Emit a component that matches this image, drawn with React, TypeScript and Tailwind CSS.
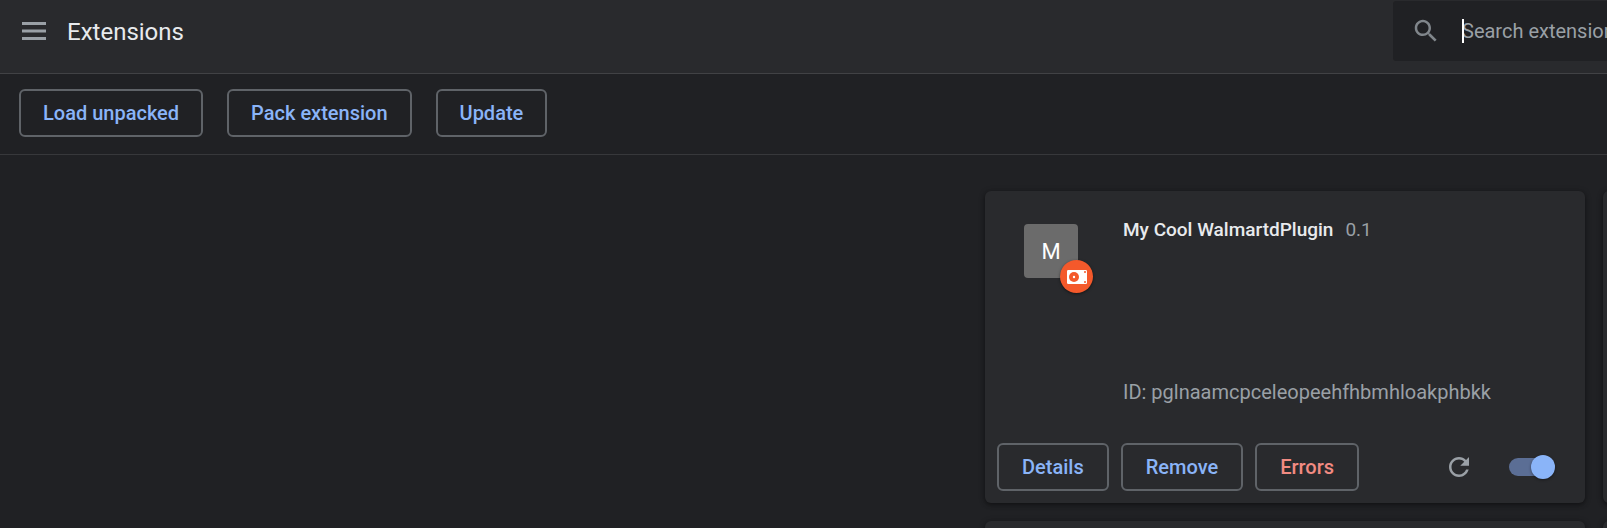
import { useState } from "react";
import type { ReactNode } from "react";

type ButtonProps = { children: ReactNode; tone?: "toolbar" | "card" | "danger" };

const toneClasses = {
  toolbar: "px-[22px] text-[#8ab4f8]",
  card: "px-[23px] text-[#8ab4f8]",
  danger: "px-[23px] text-[#f28b82]",
};

function ActionButton({ children, tone = "toolbar" }: ButtonProps) {
  return (
    <button
      type="button"
      className={`h-12 shrink-0 whitespace-nowrap rounded-md border-2 border-[#5f6368] text-[20px] font-medium ${toneClasses[tone]}`}
    >
      {children}
    </button>
  );
}

function Header() {
  return (
    <header className="flex items-start border-b border-[#414245] bg-[#292a2d] pb-[9px]">
      <div className="flex h-16 items-center gap-[21px] pl-[22px]">
        <button type="button" aria-label="Main menu" className="shrink-0 pb-0.5">
          <svg viewBox="0 0 24 18" className="block h-[18px] w-6" fill="#9aa0a6">
            <path d="M0 0h24v3H0zM0 7.5h24v3H0zM0 15h24v3H0z" />
          </svg>
        </button>
        <h1 className="text-[24px] leading-8 text-[#e8eaed]">Extensions</h1>
      </div>
      <label className="relative mt-px ml-auto flex h-[60px] w-[214px] items-center overflow-hidden rounded-l-[3px] bg-[#202124] pl-[18px]">
        <svg viewBox="0 0 24 24" className="size-[30px] shrink-0" fill="#80868b">
          <path d="M15.5 14h-.79l-.28-.27C15.41 12.59 16 11.11 16 9.5 16 5.91 13.09 3 9.5 3S3 5.91 3 9.5 5.91 16 9.5 16c1.61 0 3.09-.59 4.23-1.57l.27.28v.79l5 4.99L20.49 19l-4.99-5zm-6 0C7.01 14 5 11.99 5 9.5S7.01 5 9.5 5 14 7.01 14 9.5 11.99 14 9.5 14z" />
        </svg>
        <input
          type="search"
          aria-label="Search extensions"
          placeholder="Search extensions"
          className="ml-[21px] w-56 shrink-0 bg-transparent text-[20px] text-[#e8eaed] outline-none placeholder:text-[#9aa0a6]"
        />
        <span className="absolute top-[18px] left-[69px] h-6 w-0.5 bg-white" />
      </label>
    </header>
  );
}

function Toggle() {
  const [on, setOn] = useState(true);
  return (
    <label className="relative flex h-6 w-[46px] items-center">
      <input
        type="checkbox"
        role="switch"
        aria-label="Extension enabled"
        checked={on}
        onChange={() => setOn(!on)}
        className="peer sr-only"
      />
      <span className="h-[18px] w-[42px] rounded-full bg-[#9aa0a6]/50 peer-checked:bg-[#5b6e95]" />
      <span className="absolute left-0 size-6 rounded-full bg-[#dadce0] shadow-[0_1px_3px_rgba(0,0,0,0.4)] peer-checked:left-[22px] peer-checked:bg-[#8ab4f8]" />
    </label>
  );
}

function Card({ children }: { children?: ReactNode }) {
  return (
    <article className="flex h-[312px] flex-col rounded-md bg-[#292a2d] shadow-[0_2px_4px_rgba(0,0,0,0.3),0_1px_6px_rgba(0,0,0,0.25)]">
      {children}
    </article>
  );
}

function ExtensionCard() {
  return (
    <Card>
      <div className="flex flex-1 pt-[27px] pl-[39px]">
        <div className="relative mt-1.5 flex size-[54px] shrink-0 items-center justify-center rounded-[4px] bg-[#6b6b6b] text-[22px] text-white">
          M
          <span className="absolute top-9 left-9 flex size-[33px] items-center justify-center rounded-full bg-[#f4592b] shadow-[0_1px_3px_rgba(0,0,0,0.5)]">
            <svg viewBox="0 0 20 14" className="h-[14px] w-5">
              <rect width="20" height="14" rx="1.2" fill="#fff" />
              <circle cx="7" cy="7" r="5" fill="#f4592b" />
              <circle cx="7" cy="7" r="1.2" fill="#fff" />
              <circle cx="18" cy="2" r="1" fill="#f4592b" />
              <circle cx="18" cy="12" r="1" fill="#f4592b" />
            </svg>
          </span>
        </div>
        <div className="flex flex-col pb-[39px] pl-[45px]">
          <div className="flex gap-3 text-[19px] leading-6">
            <h2 className="font-medium text-[#e8eaed]">My Cool WalmartdPlugin</h2>
            <span className="text-[#9aa0a6]">0.1</span>
          </div>
          <p className="mt-auto text-[20px] leading-6 text-[#9aa0a6]">ID: pglnaamcpceleopeehfhbmhloakphbkk</p>
        </div>
      </div>
      <div className="flex items-center gap-3 pr-[30px] pb-3 pl-3">
        <ActionButton tone="card">Details</ActionButton>
        <ActionButton tone="card">Remove</ActionButton>
        <ActionButton tone="danger">Errors</ActionButton>
        <div className="ml-auto flex items-center gap-[35px]">
          <button type="button" aria-label="Reload">
            <svg viewBox="0 0 24 24" className="block size-[30px]" fill="#9aa0a6">
              <path d="M17.65 6.35C16.2 4.9 14.21 4 12 4c-4.42 0-7.99 3.58-7.99 8s3.57 8 7.99 8c3.73 0 6.84-2.55 7.73-6h-2.08c-.82 2.33-3.04 4-5.65 4-3.31 0-6-2.69-6-6s2.69-6 6-6c1.66 0 3.14.69 4.22 1.78L13 11h7V4l-2.35 2.35z" />
            </svg>
          </button>
          <Toggle />
        </div>
      </div>
    </Card>
  );
}

export default function App() {
  return (
    <div className="h-screen overflow-hidden bg-[#202124] font-[Roboto,sans-serif]">
      <Header />
      <nav className="flex gap-6 border-b border-[#37383b] px-[19px] pt-[15px] pb-[17px]">
        <ActionButton>Load unpacked</ActionButton>
        <ActionButton>Pack extension</ActionButton>
        <ActionButton>Update</ActionButton>
      </nav>
      <main className="flex justify-end overflow-hidden pt-9">
        <div className="grid w-[622px] grid-cols-[600px_600px] gap-[18px]">
          <ExtensionCard />
          <Card />
          <Card />
          <Card />
        </div>
      </main>
    </div>
  );
}
